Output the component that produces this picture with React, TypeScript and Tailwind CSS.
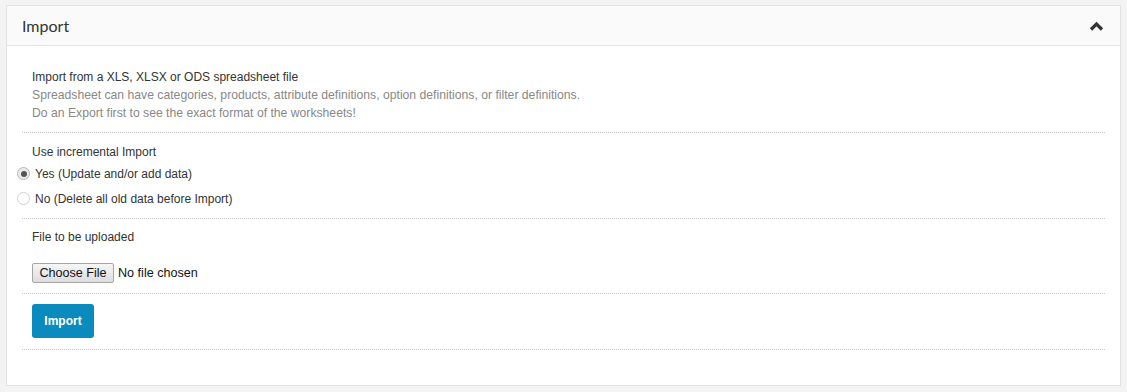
import type { ReactNode } from "react";

function Section({ children, className = "" }: { children: ReactNode; className?: string }) {
  return (
    <div className={`border-b border-dotted border-[#c4c4c4] px-[10px] ${className}`}>
      {children}
    </div>
  );
}

function Radio({ checked, label }: { checked?: boolean; label: string }) {
  return (
    <label className="-ml-[15px] flex h-[25px] items-center gap-[5px]">
      <span
        className={`flex size-[13px] items-center justify-center rounded-full border ${
          checked ? "border-[#b5b5b5] bg-[#ececec]" : "border-[#d0d0d0] bg-white"
        }`}
      >
        {checked && <span className="size-[6px] rounded-full bg-[#555]" />}
      </span>
      <span>{label}</span>
    </label>
  );
}

export default function App() {
  return (
    <div className="min-h-[392px] bg-[#f3f3f3] px-[6px] pt-[5px] font-['Liberation_Sans',Arial,sans-serif] text-[12px] leading-[18px] text-[#333]">
      <div className="border border-[#e3e3e3] bg-white">
        <div className="flex h-[40px] items-center justify-between border-b border-[#e3e3e3] bg-[#fafafa] px-[15px]">
          <h2 className="font-['Lato',sans-serif] text-[16px] text-[#333]">Import</h2>
          <svg width="15" height="10" viewBox="0 0 15 10" className="mr-[1px]">
            <polyline
              points="2,8.5 7.5,3 13,8.5"
              fill="none"
              stroke="#333"
              strokeWidth="3.2"
              strokeLinecap="butt"
              strokeLinejoin="miter"
            />
          </svg>
        </div>

        <div className="px-[15px] pb-[35px] pt-[22px]">
          <Section className="pb-[10px]">
            <p>Import from a XLS, XLSX or ODS spreadsheet file</p>
            <p className="text-[12.2px] text-[#888]">
              Spreadsheet can have categories, products, attribute definitions, option definitions, or filter definitions.
            </p>
            <p className="text-[12.2px] text-[#888]">Do an Export first to see the exact format of the worksheets!</p>
          </Section>

          <Section className="pb-[7px] pt-[10px]">
            <p>Use incremental Import</p>
            <div>
              <Radio checked label="Yes (Update and/or add data)" />
              <Radio label="No (Delete all old data before Import)" />
            </div>
          </Section>

          <Section className="pb-[10px] pt-[9px]">
            <p>File to be uploaded</p>
            <div className="mt-[17px] flex items-center gap-[4px] text-[12.6px]">
              <button className="h-[20px] w-[82px] rounded-[2px] border border-[#a6a6a6] bg-gradient-to-b from-[#f6f6f6] to-[#dddddd] leading-[18px] text-[#111]">
                Choose File
              </button>
              <span className="text-[#111]">No file chosen</span>
            </div>
          </Section>

          <Section className="pb-[11px] pt-[10px]">
            <button className="h-[34px] w-[62px] rounded-[3px] bg-[#0a8bbd] font-bold text-white">Import</button>
          </Section>
        </div>
      </div>
    </div>
  );
}
